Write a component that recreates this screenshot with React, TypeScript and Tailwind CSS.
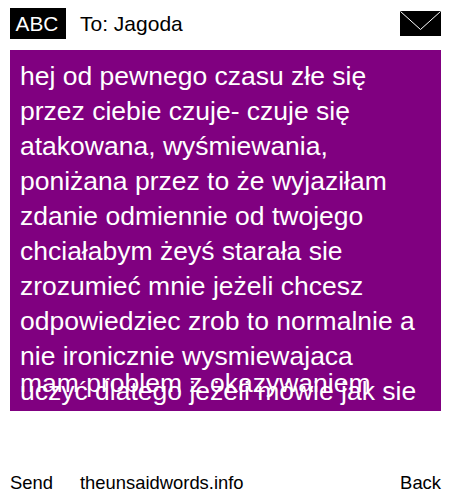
const lines = [
  "hej od pewnego czasu złe się",
  "przez ciebie czuje- czuje się",
  "atakowana, wyśmiewania,",
  "poniżana przez to że wyjaziłam",
  "zdanie odmiennie od twojego",
  "chciałabym żeyś starała sie",
  "zrozumieć mnie jeżeli chcesz",
  "odpowiedziec zrob to normalnie a",
  "nie ironicznie wysmiewajaca",
  "uczyć dlatego jeżeli mówie jak sie",
];

function Envelope() {
  return (
    <svg width="41" height="25" viewBox="0 0 41 25" className="block">
      <rect width="41" height="25" fill="#000" />
      <path d="M0.5 0.5 L20.5 18.5 L40.5 0.5" fill="none" stroke="#fff" strokeWidth="1" />
    </svg>
  );
}

export default function App() {
  return (
    <div className="w-[450px] h-[500px] bg-white text-black flex flex-col font-['Liberation_Sans',sans-serif]">
      {/* Header */}
      <header className="flex items-center h-[31px] mt-2 ml-2.5 mr-[9px] justify-between">
        <div className="flex items-center">
          <span className="w-14 h-[31px] bg-black text-white text-[20.8px] pr-0.5 flex items-center justify-center">ABC</span>
          <span className="ml-3.5 text-[21px]">To: Jagoda</span>
        </div>
        <Envelope />
      </header>

      {/* Message */}
      <main className="relative mt-[11px] ml-2.5 mr-[9px] h-[361px] bg-[#800080] text-white text-[26.5px] leading-[35px] pt-[9px] px-2.5 overflow-hidden">
        {lines.map((l) => (
          <div key={l} className="whitespace-nowrap">{l}</div>
        ))}
        <div className="absolute left-2.5 top-[316px] whitespace-nowrap">mam problem z okazywaniem</div>
      </main>

      {/* Footer */}
      <footer className="flex items-center justify-between mt-auto mb-[3px] ml-2.5 mr-[9px] text-[18.4px]">
        <div className="flex">
          <span className="w-[70px]">Send</span>
          <span>theunsaidwords.info</span>
        </div>
        <span>Back</span>
      </footer>
    </div>
  );
}
